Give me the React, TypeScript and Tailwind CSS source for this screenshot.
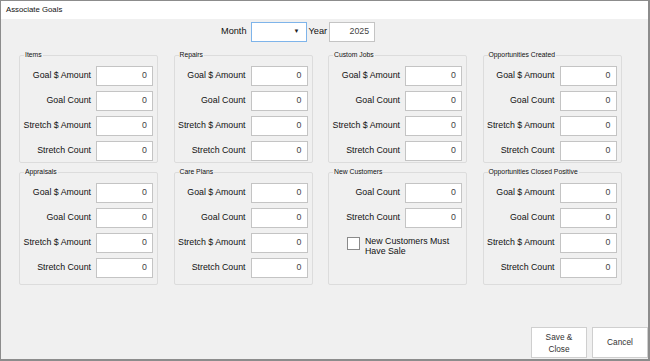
import {useState} from "react";

type Group = {
    title: string;
    fields: string[];
    checkbox?: string;
};

const topGroups: Group[] = [
    {title: "Items", fields: ["Goal $ Amount", "Goal Count", "Stretch $ Amount", "Stretch Count"]},
    {title: "Repairs", fields: ["Goal $ Amount", "Goal Count", "Stretch $ Amount", "Stretch Count"]},
    {title: "Custom Jobs", fields: ["Goal $ Amount", "Goal Count", "Stretch $ Amount", "Stretch Count"]},
    {title: "Opportunities Created", fields: ["Goal $ Amount", "Goal Count", "Stretch $ Amount", "Stretch Count"]},
];

const bottomGroups: Group[] = [
    {title: "Appraisals", fields: ["Goal $ Amount", "Goal Count", "Stretch $ Amount", "Stretch Count"]},
    {title: "Care Plans", fields: ["Goal $ Amount", "Goal Count", "Stretch $ Amount", "Stretch Count"]},
    {title: "New Customers", fields: ["Goal Count", "Stretch Count"], checkbox: "New Customers Must Have Sale"},
    {title: "Opportunities Closed Positive", fields: ["Goal $ Amount", "Goal Count", "Stretch $ Amount", "Stretch Count"]},
];

function FieldRow({label}: {label: string}) {
    return (
        <div className="flex items-center justify-end gap-[5px]">
            <span className="text-[8.8px] text-[#111] whitespace-nowrap">{label}</span>
            <div className="w-[57px] h-[20px] bg-white border border-[#c4c4c4] flex items-center justify-end pr-[5px] text-[8.8px] text-[#444]">
                0
            </div>
        </div>
    );
}

function GroupBox({group, tall}: {group: Group; tall: boolean}) {
    const [checked, setChecked] = useState(false);
    return (
        <fieldset className={`min-w-0 border border-[#dcdcdc] rounded-[2px] ${tall ? "h-[119px] pt-[5px]" : "h-[114px] pt-[5px]"} pr-[4px]`}>
            <legend className="ml-[4px] px-[1px] text-[6.8px] leading-[12px] text-[#111] whitespace-nowrap">{group.title}</legend>
            <div className="flex flex-col gap-[5px]">
                {group.fields.map((f) => (
                    <FieldRow key={f} label={f}/>
                ))}
                {group.checkbox && (
                    <label className="flex items-start gap-[5px] pl-[18px] pt-[3px] cursor-pointer" onClick={() => setChecked(!checked)}>
                        <span className="w-[13px] h-[13px] mt-[1px] bg-white border border-[#8a8a8a] flex items-center justify-center text-[9px] leading-none shrink-0">
                            {checked ? "✓" : ""}
                        </span>
                        <span className="text-[8.8px] leading-[10px] text-[#111] w-[96px]">{group.checkbox}</span>
                    </label>
                )}
            </div>
        </fieldset>
    );
}

function App() {
    return (
        <div className="w-[650px] h-[361px] flex flex-col border-l border-t border-r-2 border-b-2 border-[#8c8c8c] bg-[#f0f0f0] font-['Liberation_Sans',Arial,sans-serif] overflow-hidden">
            <div className="h-[18px] bg-white flex items-center pl-[5px] text-[7.8px] text-[#111] shrink-0">
                Associate Goals
            </div>
            <div className="flex-1 flex flex-col pl-[18px]">
                <div className="flex items-center mt-[2px] h-[21px] pl-[202px]">
                    <span className="text-[9.2px] text-[#111] mr-[4px]">Month</span>
                    <div className="w-[56px] h-[20px] bg-white border border-[#7eb4ea] flex items-center justify-end pr-[6px] text-[6px] text-[#222]">
                        ▼
                    </div>
                    <span className="text-[9.2px] text-[#111] ml-[2px] mr-[2px]">Year</span>
                    <div className="w-[46px] h-[20px] bg-white border border-[#c4c4c4] flex items-center justify-end pr-[5px] text-[8.8px] text-[#444]">
                        2025
                    </div>
                </div>
                <div className="grid grid-cols-[repeat(4,139px)] gap-x-[15.5px] mt-[7px]">
                    {topGroups.map((g) => (
                        <GroupBox key={g.title} group={g} tall={false}/>
                    ))}
                </div>
                <div className="grid grid-cols-[repeat(4,139px)] gap-x-[15.5px] mt-[3px]">
                    {bottomGroups.map((g) => (
                        <GroupBox key={g.title} group={g} tall={true}/>
                    ))}
                </div>
                <div className="flex-1 flex items-end justify-end gap-[5px] pb-[1px]">
                    <button className="w-[56px] h-[31px] bg-white border border-[#cfcfcf] text-[8.3px] leading-[12px] text-[#333]">
                        Save &amp;<br/>Close
                    </button>
                    <button className="w-[56px] h-[31px] bg-white border border-[#cfcfcf] text-[8.3px] text-[#333]">
                        Cancel
                    </button>
                </div>
            </div>
        </div>
    );
}

export default App;
